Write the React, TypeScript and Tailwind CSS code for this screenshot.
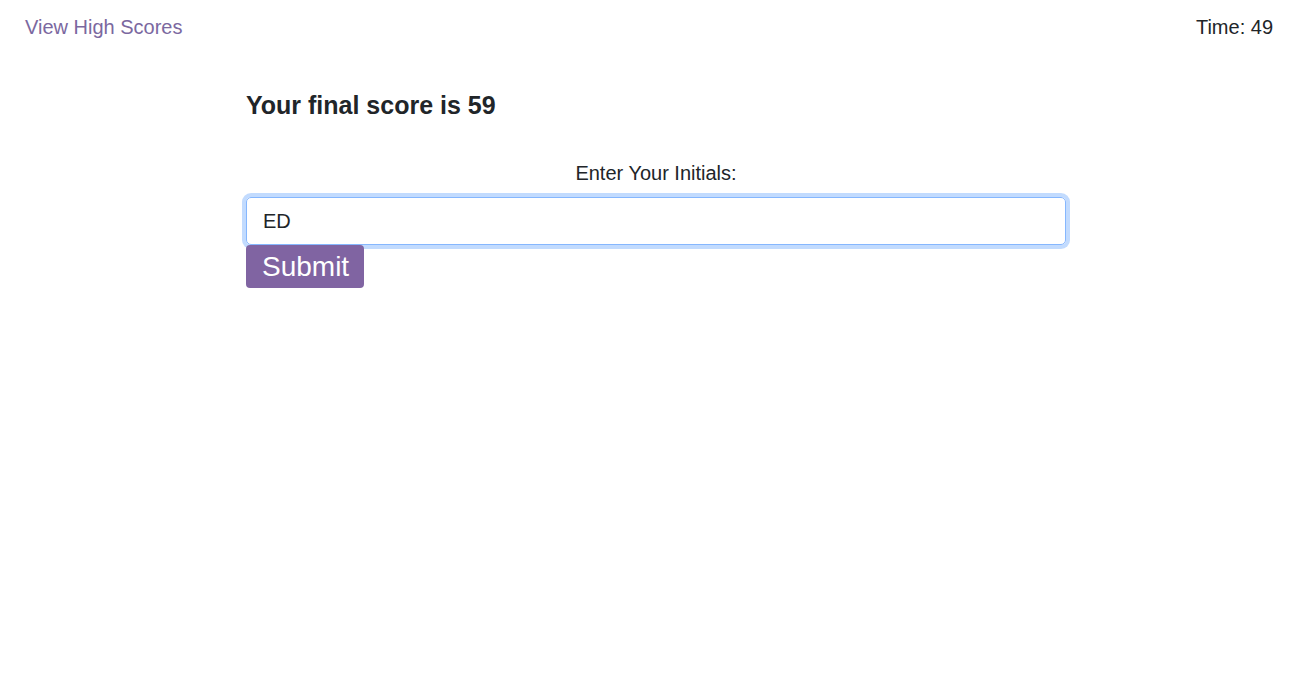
import { useState } from "react";

export default function App() {
  const [initials, setInitials] = useState("ED");

  return (
    <div className="min-h-[697px] bg-white text-[#212529] font-['Liberation_Sans',Arial,sans-serif]">
      <header className="flex justify-between px-[25px] pt-[12px] text-[20px] leading-[30px]">
        <a href="#" className="text-[#7b68a0]">
          View High Scores
        </a>
        <div className="pr-[18px]">Time: 49</div>
      </header>

      <main className="ml-[246px] w-[820px] pt-[48px]">
        <h4 className="text-[25px] font-bold leading-[30px]">
          Your final score is 59
        </h4>
        <form className="mt-[38px] flex flex-col" onSubmit={(e) => e.preventDefault()}>
          <label htmlFor="initials" className="text-center text-[20px] leading-[30px]">
            Enter Your Initials:
          </label>
          <input
            id="initials"
            type="text"
            autoFocus
            value={initials}
            onChange={(e) => setInitials(e.target.value)}
            className="mt-[9px] h-[48px] w-full rounded-[5px] border border-[#86b7fe] px-4 text-[20px] text-[#212529] outline-none ring-4 ring-[#0d6efd]/25"
          />
          <button
            type="submit"
            className="h-[43px] w-[118px] rounded-[4px] bg-[#8064a2] px-4 text-[28px] leading-[43px] text-white"
          >
            Submit
          </button>
        </form>
      </main>
    </div>
  );
}
